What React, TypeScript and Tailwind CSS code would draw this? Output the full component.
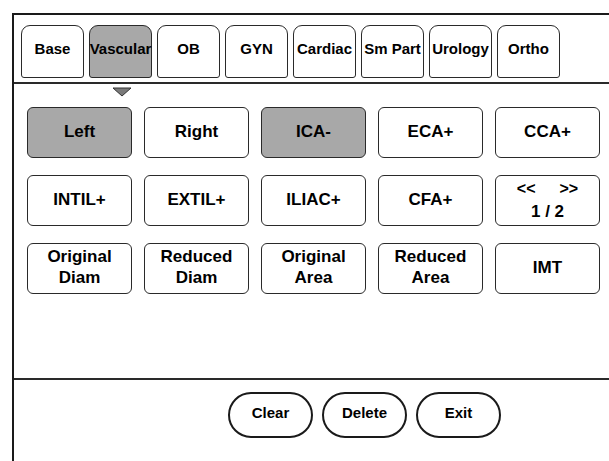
const tabs = ["Base", "Vascular", "OB", "GYN", "Cardiac", "Sm Part", "Urology", "Ortho"];

type Cell = { lines: string[]; active?: boolean; pager?: boolean };

const cells: Cell[] = [
  { lines: ["Left"], active: true },
  { lines: ["Right"] },
  { lines: ["ICA-"], active: true },
  { lines: ["ECA+"] },
  { lines: ["CCA+"] },
  { lines: ["INTIL+"] },
  { lines: ["EXTIL+"] },
  { lines: ["ILIAC+"] },
  { lines: ["CFA+"] },
  { lines: [], pager: true },
  { lines: ["Original", "Diam"] },
  { lines: ["Reduced", "Diam"] },
  { lines: ["Original", "Area"] },
  { lines: ["Reduced", "Area"] },
  { lines: ["IMT"] },
];

const Tab = ({ label, active }: { label: string; active: boolean }) => (
  <div
    className={
      "w-[63px] h-[53px] flex items-center justify-center rounded-t-[9px] rounded-b-[3px] border-[1.5px] border-[#2a2a2a] text-[15px] whitespace-nowrap " +
      (active ? "bg-[#a8a8a8]" : "bg-white")
    }
  >
    <span className="-mt-[4px]">{label}</span>
  </div>
);

const MeasureButton = ({ cell }: { cell: Cell }) => (
  <div
    className={
      "h-[51px] flex flex-col items-center justify-center rounded-[6px] border-[1.5px] border-[#2a2a2a] text-[17px] leading-[21px] " +
      (cell.active ? "bg-[#a8a8a8]" : "bg-white")
    }
  >
    {cell.pager ? (
      <>
        <div className="flex gap-[24px] text-[16px] leading-[18px]">
          <span>&lt;&lt;</span>
          <span>&gt;&gt;</span>
        </div>
        <div className="mt-[3px]">1 / 2</div>
      </>
    ) : (
      <div className="-mt-[3px]">
        {cell.lines.map((l) => (
          <div key={l} className="text-center">{l}</div>
        ))}
      </div>
    )}
  </div>
);

const PillButton = ({ label }: { label: string }) => (
  <div className="w-[85px] h-[46px] flex items-center justify-center rounded-full border-2 border-[#1a1a1a] text-[15px]">
    <span className="-mt-[3px]">{label}</span>
  </div>
);

export default function App() {
  return (
    <div className="w-[609px] h-[461px] bg-white overflow-hidden text-black font-bold font-['Liberation_Sans',Arial,sans-serif]">
      <div className="ml-[12px] mt-[13px] h-[448px] border-l-2 border-t-2 border-[#1a1a1a] flex flex-col">
        {/* mode tabs */}
        <div className="flex gap-[5px] pl-[7px] pt-[10px]">
          {tabs.map((t) => (
            <Tab key={t} label={t} active={t === "Vascular"} />
          ))}
        </div>
        <div className="mt-[4px] border-t-2 border-[#2a2a2a]" />

        {/* active tab marker */}
        <div className="h-[23px] pl-[98px] pt-[3px]">
          <svg width="20" height="10" viewBox="0 0 20 10">
            <polygon points="1,1 19,1 10,9" fill="#7a7a7a" stroke="#333" strokeWidth="1" />
          </svg>
        </div>

        {/* measurement buttons */}
        <div className="pl-[13px] grid grid-cols-[repeat(5,105px)] gap-x-[12px] gap-y-[17px]">
          {cells.map((c, i) => (
            <MeasureButton key={i} cell={c} />
          ))}
        </div>

        <div className="mt-[84px] border-t-2 border-[#2a2a2a]" />

        <div className="mt-[12px] pl-[214px] flex gap-[9px]">
          <PillButton label="Clear" />
          <PillButton label="Delete" />
          <PillButton label="Exit" />
        </div>
      </div>
    </div>
  );
}
